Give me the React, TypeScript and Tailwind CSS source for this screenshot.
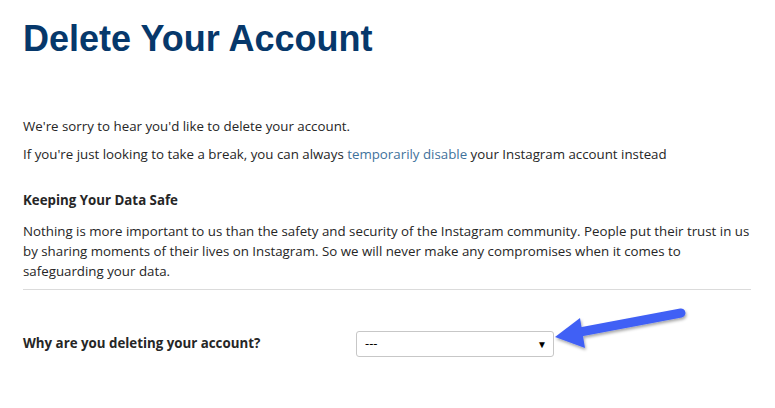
import React from "react";

export default function App() {
  const body = { fontFamily: '"Open Sans", "Noto Sans", sans-serif' };
  return (
    <div className="relative w-[775px] h-[408px] bg-white overflow-hidden text-[#262626]" style={body}>
      <div className="pl-[23px] w-[751px]">
        <h1
          className="pt-[16px] text-[36px] leading-[46px] font-bold text-[#06386b]"
          style={{ fontFamily: '"Liberation Sans", Arial, sans-serif' }}
        >
          Delete Your Account
        </h1>
        <p className="mt-[55px] text-[13.3px] leading-[18px]">We're sorry to hear you'd like to delete your account.</p>
        <p className="mt-[10px] text-[13.3px] leading-[18px]">
          If you're just looking to take a break, you can always{" "}
          <a className="text-[#3f729b]">temporarily disable</a> your Instagram account instead
        </p>
        <h2 className="mt-[28px] text-[13.3px] leading-[18px] font-bold">Keeping Your Data Safe</h2>
        <p className="mt-[12px] text-[13.3px] leading-[20px]">
          Nothing is more important to us than the safety and security of the Instagram community. People put their trust in us by sharing moments of their lives on Instagram. So we will never make any compromises when it comes to safeguarding your data.
        </p>
        <div className="mt-[8px] h-px bg-[#dbdbdb]" />
        <div className="mt-[41px] flex items-center">
          <label className="w-[333px] text-[13.3px] font-bold">Why are you deleting your account?</label>
          <div className="w-[198px] h-[26px] border border-[#c7c7c7] rounded-[3px] flex items-center justify-between pl-[8px] pr-[6px] text-[13px] text-black">
            <span>---</span>
            <span className="text-[10px]">▼</span>
          </div>
        </div>
      </div>
      <svg className="absolute left-[540px] top-[295px]" width="160" height="70" viewBox="540 295 160 70">
        <defs>
          <filter id="sh" x="-20%" y="-40%" width="140%" height="180%">
            <feDropShadow dx="1" dy="2" stdDeviation="1.5" floodColor="#000" floodOpacity="0.35" />
          </filter>
        </defs>
        <g filter="url(#sh)">
          <line x1="681" y1="313" x2="580" y2="332" stroke="#4160f5" strokeWidth="9" strokeLinecap="round" />
          <polygon points="555,337 580,318 585,348" fill="#4160f5" />
        </g>
      </svg>
    </div>
  );
}
